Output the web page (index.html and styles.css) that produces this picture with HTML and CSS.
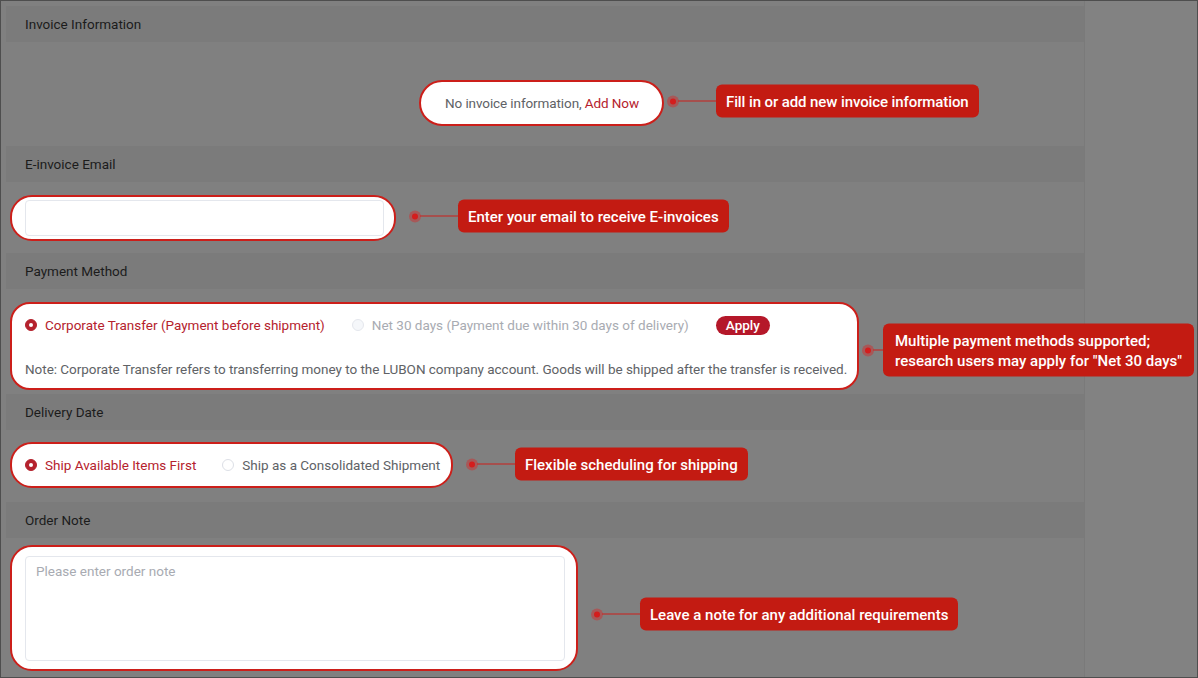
FILE: index.html
```html
<!DOCTYPE html>
<html lang="en">

<head>
    <meta charset="UTF-8">
    <meta name="viewport" content="width=device-width, initial-scale=1.0">
    <title>Checkout - Invoice and Payment</title>
    <link rel="stylesheet" href="styles.css">
</head>

<body>
    <div class="page">
        <div class="main">

            <!-- Invoice -->
            <section class="block">
                <div class="block-title">Invoice Information</div>
                <div class="block-body invoice-body">
                    <div class="mark mark-pill">
                        <span class="muted">No invoice information,&nbsp;</span><a class="link">Add Now</a>
                        <div class="tip tip-near">
                            <span class="tip-dot"></span><span class="tip-line"></span>
                            <span class="tip-box">Fill in or add new invoice information</span>
                        </div>
                    </div>
                </div>
            </section>

            <!-- E-invoice email -->
            <section class="block">
                <div class="block-title">E-invoice Email</div>
                <div class="block-body email-body">
                    <div class="mark mark-email">
                        <input class="field" type="text">
                        <div class="tip">
                            <span class="tip-dot"></span><span class="tip-line"></span>
                            <span class="tip-box">Enter your email to receive E-invoices</span>
                        </div>
                    </div>
                </div>
            </section>

            <!-- Payment -->
            <section class="block">
                <div class="block-title">Payment Method</div>
                <div class="block-body pay-body">
                    <div class="mark mark-pay">
                        <div class="radio-row">
                            <label class="radio checked"><span class="dot"></span>Corporate Transfer (Payment before shipment)</label>
                            <label class="radio disabled"><span class="dot"></span>Net 30 days (Payment due within 30 days of delivery)</label>
                            <button type="button" class="apply">Apply</button>
                        </div>
                        <p class="pay-note">Note: Corporate Transfer refers to transferring money to the LUBON company account. Goods will be shipped after the transfer is received.</p>
                        <div class="tip tip-near tip-short">
                            <span class="tip-dot"></span><span class="tip-line"></span>
                            <span class="tip-box">Multiple payment methods supported;<br>research users may apply for "Net 30 days"</span>
                        </div>
                    </div>
                </div>
            </section>

            <!-- Delivery -->
            <section class="block">
                <div class="block-title">Delivery Date</div>
                <div class="block-body ship-body">
                    <div class="mark mark-ship">
                        <label class="radio checked"><span class="dot"></span>Ship Available Items First</label>
                        <label class="radio"><span class="dot"></span>Ship as a Consolidated Shipment</label>
                        <div class="tip tip-mid">
                            <span class="tip-dot"></span><span class="tip-line"></span>
                            <span class="tip-box">Flexible scheduling for shipping</span>
                        </div>
                    </div>
                </div>
            </section>

            <!-- Order note -->
            <section class="block">
                <div class="block-title">Order Note</div>
                <div class="block-body note-body">
                    <div class="mark mark-note">
                        <textarea class="note-area" placeholder="Please enter order note"></textarea>
                        <div class="tip tip-low">
                            <span class="tip-dot"></span><span class="tip-line"></span>
                            <span class="tip-box">Leave a note for any additional requirements</span>
                        </div>
                    </div>
                </div>
            </section>

        </div>
        <div class="side"></div>
    </div>
</body>

</html>
```

FILE: styles.css
```css
* {
    box-sizing: border-box;
}

body {
    margin: 0;
    font-family: Roboto, "Liberation Sans", Arial, sans-serif;
    font-size: 13.5px;
    color: #606266;
}

.page {
    width: 1198px;
    height: 678px;
    border: 1px solid #4e4e4e;
    background-color: #808080;
    display: flex;
    overflow: hidden;
}

.main {
    width: 1084px;
    padding: 5px 0 0 5px;
    border-right: 1px solid #7a7a7a;
}

.side {
    flex: 1;
    background-color: #828282;
}

/* Section bands */
.block-title {
    height: 36px;
    padding: 0 0 1px 19px;
    display: flex;
    align-items: center;
    background-color: #7b7b7b;
    color: #1c1c1c;
}

.block-body {
    padding-left: 4px;
}

.invoice-body {
    height: 104px;
    padding: 38px 7px 0 0;
    display: flex;
    justify-content: center;
    align-items: flex-start;
}

.email-body {
    height: 71px;
    padding-top: 13px;
}

.pay-body {
    height: 105px;
    padding-top: 13px;
}

.ship-body {
    height: 72px;
    padding-top: 12px;
}

.note-body {
    padding-top: 7px;
}

/* Highlighted areas */
.mark {
    position: relative;
    background-color: #fff;
    border: 2px solid #cc1f1a;
    border-radius: 22px;
}

.mark-pill {
    height: 46px;
    padding: 0 23px 0 24px;
    display: inline-flex;
    align-items: center;
    border-radius: 23px;
    letter-spacing: -0.1px;
}

.link {
    color: #b5222d;
    cursor: pointer;
}

.mark-email {
    width: 386px;
    height: 46px;
    padding: 3px 10px 3px 13px;
}

.field {
    width: 359px;
    height: 36px;
    border: 1px solid #e4e7ed;
    border-radius: 4px;
    outline: none;
}

.mark-pay {
    width: 849px;
    padding: 12px 10px 10px 13px;
    border-radius: 20px;
}

.radio-row {
    display: flex;
    align-items: center;
    height: 18px;
}

.radio {
    display: inline-flex;
    align-items: center;
    white-space: nowrap;
    color: #606266;
}

.radio .dot {
    width: 12px;
    height: 12px;
    margin-right: 8px;
    border-radius: 50%;
    border: 1px solid #dcdfe6;
    background-color: #fff;
    position: relative;
}

.radio.checked {
    color: #b5222d;
}

.radio.checked .dot {
    border-color: #b5222d;
    background-color: #b5222d;
}

.radio.checked .dot::after {
    content: "";
    position: absolute;
    left: 3px;
    top: 3px;
    width: 4px;
    height: 4px;
    border-radius: 50%;
    background-color: #fff;
}

.radio.disabled {
    color: #a8abb2;
}

.radio.disabled .dot {
    background-color: #f5f7fa;
    border-color: #e4e7ed;
}

.radio-row .radio + .radio {
    margin-left: 27px;
}

.apply {
    margin-left: 27px;
    height: 19px;
    padding: 0 10px;
    border: none;
    border-radius: 10px;
    background-color: #b5182a;
    color: #fff;
    font-family: inherit;
    font-size: 13.5px;
    font-weight: 500;
    line-height: 19px;
}

.pay-note {
    margin: 26px 0 0;
    line-height: 18px;
    white-space: nowrap;
    letter-spacing: -0.03px;
}

.mark-ship {
    width: 443px;
    height: 46px;
    padding: 0 11px 0 13px;
    display: flex;
    align-items: center;
}

.mark-ship .radio + .radio {
    margin-left: 26px;
}

.mark-note {
    width: 568px;
    height: 126px;
    padding: 9px 11px 8px 13px;
}

.note-area {
    display: block;
    width: 100%;
    height: 100%;
    padding: 5px 10px;
    border: 1px solid #e4e7ed;
    border-radius: 4px;
    resize: none;
    outline: none;
    font-family: inherit;
    font-size: 13.5px;
    line-height: 18px;
    color: #606266;
}

.note-area::placeholder {
    color: #a8abb2;
}

/* Callouts */
.tip {
    position: absolute;
    left: calc(100% + 15px);
    top: calc(50% - 2px);
    transform: translateY(-50%);
    display: flex;
    align-items: center;
}

.tip-near {
    left: calc(100% + 5px);
}

.tip-mid {
    top: calc(50% - 1px);
}

.tip-low {
    top: calc(50% + 6px);
}

.tip-dot {
    width: 12px;
    height: 12px;
    border-radius: 50%;
    background-color: rgba(214, 40, 40, 0.45);
    position: relative;
    flex: none;
}

.tip-dot::after {
    content: "";
    position: absolute;
    left: 3px;
    top: 3px;
    width: 6px;
    height: 6px;
    border-radius: 50%;
    background-color: #d41d1d;
}

.tip-line {
    width: 38px;
    height: 1px;
    background-color: #cc1f1a;
    margin-left: -1px;
}

.tip-box {
    white-space: nowrap;
    padding: 0 10px;
    height: 33px;
    display: flex;
    align-items: center;
    background-color: #c31b12;
    color: #fff;
    font-size: 15px;
    font-weight: 500;
    border-radius: 6px;
}

.tip-short {
    top: calc(50% + 4px);
}

.tip-short .tip-line {
    width: 10px;
}

.tip-short .tip-box {
    height: 53px;
    padding: 0 12px;
    line-height: 20px;
}
```
